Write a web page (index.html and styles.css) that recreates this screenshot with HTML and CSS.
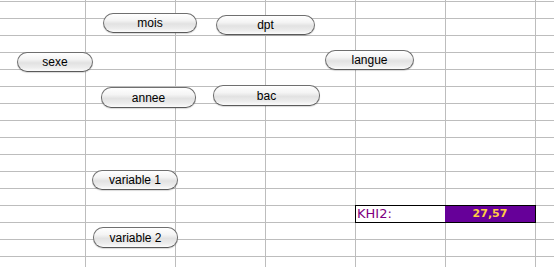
FILE: index.html
```html
<!doctype html>
<html>
    <head>
        <title>Tableau croisé</title>
        <!-- Style -->
        <link rel="stylesheet" href="styles.css">
    </head>
    <body>
        <div class="sheet">
            <!-- variable buttons -->
            <button class="pill btn-mois">mois</button>
            <button class="pill btn-dpt">dpt</button>
            <button class="pill btn-sexe">sexe</button>
            <button class="pill btn-langue">langue</button>
            <button class="pill btn-annee">annee</button>
            <button class="pill btn-bac">bac</button>
            <button class="pill btn-var1">variable 1</button>
            <button class="pill btn-var2">variable 2</button>

            <!-- result -->
            <div class="result">
                <div class="result-label">KHI2:</div>
                <div class="result-value">27,57</div>
            </div>
        </div>
    </body>
</html>
```

FILE: styles.css
```css
html, body {
    margin: 0;
    padding: 0;
    background-color: #fff;
}

.sheet {
    position: relative;
    width: 554px;
    height: 267px;
    overflow: hidden;
    background-image:
        linear-gradient(to right, #bdbdbd 1px, transparent 1px),
        linear-gradient(to bottom, #bdbdbd 1px, transparent 1px);
    background-size: 90px 100%, 100% 17px;
    background-position: 85px 0, 0 1px;
}

.pill {
    position: absolute;
    box-sizing: border-box;
    height: 20px;
    padding: 0;
    border: 1px solid #6f6f6f;
    border-bottom-color: #5a5a5a;
    border-radius: 10px;
    background: linear-gradient(to bottom, #ffffff 0%, #f4f4f4 35%, #e2e2e2 55%, #ececec 80%, #fbfbfb 100%);
    box-shadow: 0 1px 1px rgba(0, 0, 0, 0.15);
    font-family: "Liberation Sans", Arial, sans-serif;
    font-size: 12px;
    color: #000;
    text-align: center;
    line-height: 18px;
}

.btn-mois { left: 103px; top: 13px; width: 94px; }
.btn-dpt { left: 216px; top: 15px; width: 99px; }
.btn-sexe { left: 17px; top: 52px; width: 76px; }
.btn-langue { left: 325px; top: 50px; width: 89px; }
.btn-annee { left: 101px; top: 87px; width: 95px; height: 21px; }
.btn-bac { left: 213px; top: 85px; width: 107px; height: 21px; }
.btn-var1 { left: 92px; top: 170px; width: 86px; }
.btn-var2 { left: 93px; top: 227px; width: 85px; height: 21px; }

.result {
    position: absolute;
    left: 355px;
    top: 205px;
    display: flex;
    border: 1px solid #000;
    height: 16px;
}

.result-label {
    width: 89px;
    background-color: #fff;
    color: #800080;
    font-family: "DejaVu Sans", Verdana, sans-serif;
    font-size: 13px;
    line-height: 16px;
    padding-left: 1px;
    box-sizing: border-box;
}

.result-value {
    width: 90px;
    background-color: #660099;
    color: #ffcc44;
    font-family: "DejaVu Sans", Verdana, sans-serif;
    font-weight: bold;
    font-size: 11px;
    line-height: 16px;
    text-align: center;
}
```
